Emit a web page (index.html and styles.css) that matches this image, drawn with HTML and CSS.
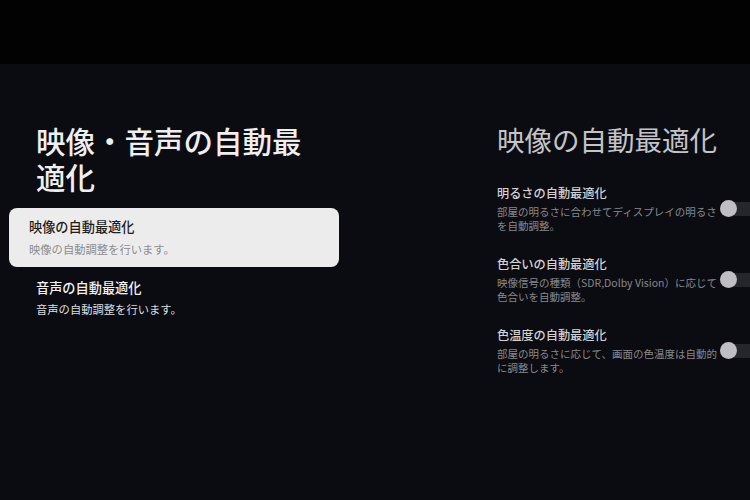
FILE: index.html
```html
<!DOCTYPE html>
<html lang="ja">
<head>
    <meta charset="UTF-8">
    <meta name="viewport" content="width=device-width, initial-scale=1.0">
    <title>映像・音声の自動最適化</title>
    <link rel="stylesheet" href="styles.css">
</head>
<body>
    <div class="topbar"></div>
    <div class="main">
        <div class="menu">
            <h1 class="menu-title">映像・音声の自動最適化</h1>
            <div class="menu-item selected">
                <div class="item-title">映像の自動最適化</div>
                <div class="item-sub">映像の自動調整を行います。</div>
            </div>
            <div class="menu-item">
                <div class="item-title">音声の自動最適化</div>
                <div class="item-sub">音声の自動調整を行います。</div>
            </div>
        </div>

        <div class="detail">
            <h2 class="detail-title">映像の自動最適化</h2>
            <div class="setting">
                <div class="setting-text">
                    <div class="setting-title">明るさの自動最適化</div>
                    <div class="setting-desc">部屋の明るさに合わせてディスプレイの明るさ<br>を自動調整。</div>
                </div>
                <div class="toggle"><span class="knob"></span></div>
            </div>
            <div class="setting">
                <div class="setting-text">
                    <div class="setting-title">色合いの自動最適化</div>
                    <div class="setting-desc">映像信号の種類（SDR,Dolby Vision）に応じて<br>色合いを自動調整。</div>
                </div>
                <div class="toggle"><span class="knob"></span></div>
            </div>
            <div class="setting">
                <div class="setting-text">
                    <div class="setting-title">色温度の自動最適化</div>
                    <div class="setting-desc">部屋の明るさに応じて、画面の色温度は自動的<br>に調整します。</div>
                </div>
                <div class="toggle"><span class="knob"></span></div>
            </div>
        </div>
    </div>
</body>
</html>
```

FILE: styles.css
```css
html, body {
    margin: 0;
    height: 100%;
}
body {
    font-family: "Noto Sans CJK JP", "Noto Sans", sans-serif;
    background-color: #0b0c12;
    overflow: hidden;
}
.topbar {
    height: 64px;
    background-color: #020202;
}
.main {
    display: flex;
    height: 436px;
}

/* 左側のメニュー */
.menu {
    flex: none;
    width: 497px;
    padding-top: 58px;
    box-sizing: border-box;
}
.menu-title {
    margin: 0 0 14px 36px;
    width: 280px;
    font-size: 29.5px;
    line-height: 36px;
    font-weight: 500;
    color: #efefef;
}
.menu-item {
    width: 330px;
    padding: 0 0 0 27px;
    margin: 12px 0 0 9px;
    box-sizing: border-box;
}
.menu-item.selected {
    margin-top: 0;
    padding: 10px 20px;
    height: 59px;
    background-color: #ececec;
    border-radius: 8px;
}
.item-title {
    font-size: 13.2px;
    line-height: 18px;
    font-weight: 500;
    color: #f2f2f2;
}
.item-sub {
    margin-top: 4px;
    font-size: 11.3px;
    line-height: 16px;
    color: #dedede;
}
.selected .item-title {
    color: #1e1e1e;
}
.selected .item-sub {
    margin-top: 5px;
    color: #8c8c8c;
}

/* 右側の詳細 */
.detail {
    flex: none;
    width: 253px;
    padding-top: 58px;
}
.detail-title {
    margin: 0 0 28px 0;
    font-size: 27.5px;
    line-height: 34px;
    font-weight: 400;
    color: #c4c4c6;
    white-space: nowrap;
}
.setting {
    display: flex;
    align-items: center;
    margin-bottom: 22px;
}
.setting-text {
    flex: none;
    width: 224px;
}
.setting-title {
    font-size: 12.2px;
    line-height: 18px;
    font-weight: 500;
    color: #d2d2d2;
}
.setting-desc {
    margin-top: 3px;
    font-size: 10.5px;
    line-height: 14px;
    color: #88888a;
    white-space: nowrap;
}
.toggle {
    position: relative;
    flex: none;
    width: 36px;
    height: 14px;
    border-radius: 7px;
    background-color: #25262b;
}
.knob {
    position: absolute;
    left: -1px;
    top: -2px;
    width: 17px;
    height: 17px;
    border-radius: 50%;
    background-color: #bebec3;
}
```
